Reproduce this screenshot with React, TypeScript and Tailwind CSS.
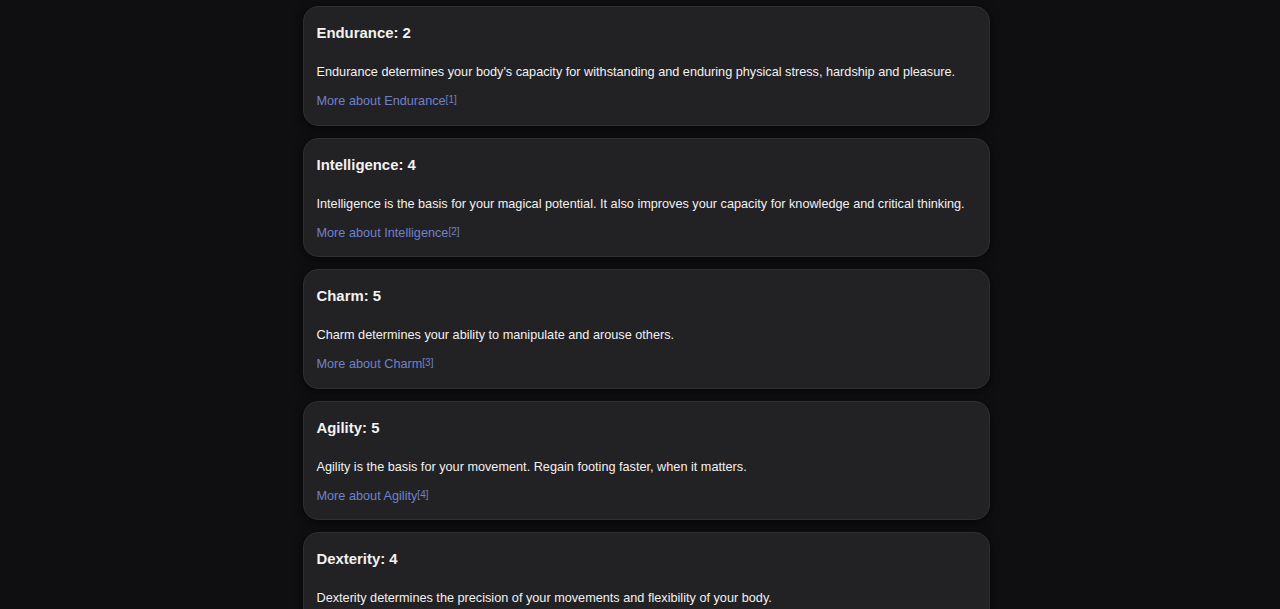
import React from "react";

const stats = [
  { name: "Endurance", value: 2, desc: "Endurance determines your body's capacity for withstanding and enduring physical stress, hardship and pleasure.", ref: 1 },
  { name: "Intelligence", value: 4, desc: "Intelligence is the basis for your magical potential. It also improves your capacity for knowledge and critical thinking.", ref: 2 },
  { name: "Charm", value: 5, desc: "Charm determines your ability to manipulate and arouse others.", ref: 3 },
  { name: "Agility", value: 5, desc: "Agility is the basis for your movement. Regain footing faster, when it matters.", ref: 4 },
  { name: "Dexterity", value: 4, desc: "Dexterity determines the precision of your movements and flexibility of your body.", ref: 5 },
];

export default function App() {
  return (
    <div
      className="h-[609px] overflow-hidden bg-[#0f0e10] flex justify-center pl-[12px] pt-[6px]"
      style={{ fontFamily: '"Liberation Sans", Arial, sans-serif' }}
    >
      <div className="w-[687px] flex flex-col gap-[12px]">
        {stats.map((s) => (
          <div
            key={s.name}
            className="shrink-0 h-[119.5px] rounded-[15px] border border-[#2f2e31] bg-[#222124] shadow-[0_2px_10px_rgba(0,0,0,0.6)] px-[13px] pt-[17px]"
          >
            <h3 className="text-[14.9px] leading-[18px] font-bold text-[#f2f2f2]">
              {s.name}: {s.value}
            </h3>
            <p className="mt-[22px] text-[12.7px] leading-[16px] text-[#f2f2f2] whitespace-nowrap">{s.desc}</p>
            <a className="block mt-[13px] text-[12.7px] leading-[16px] text-[#7082cc]">
              More about {s.name}
              <sup className="text-[10px] relative top-[-2px]">[{s.ref}]</sup>
            </a>
          </div>
        ))}
      </div>
    </div>
  );
}
